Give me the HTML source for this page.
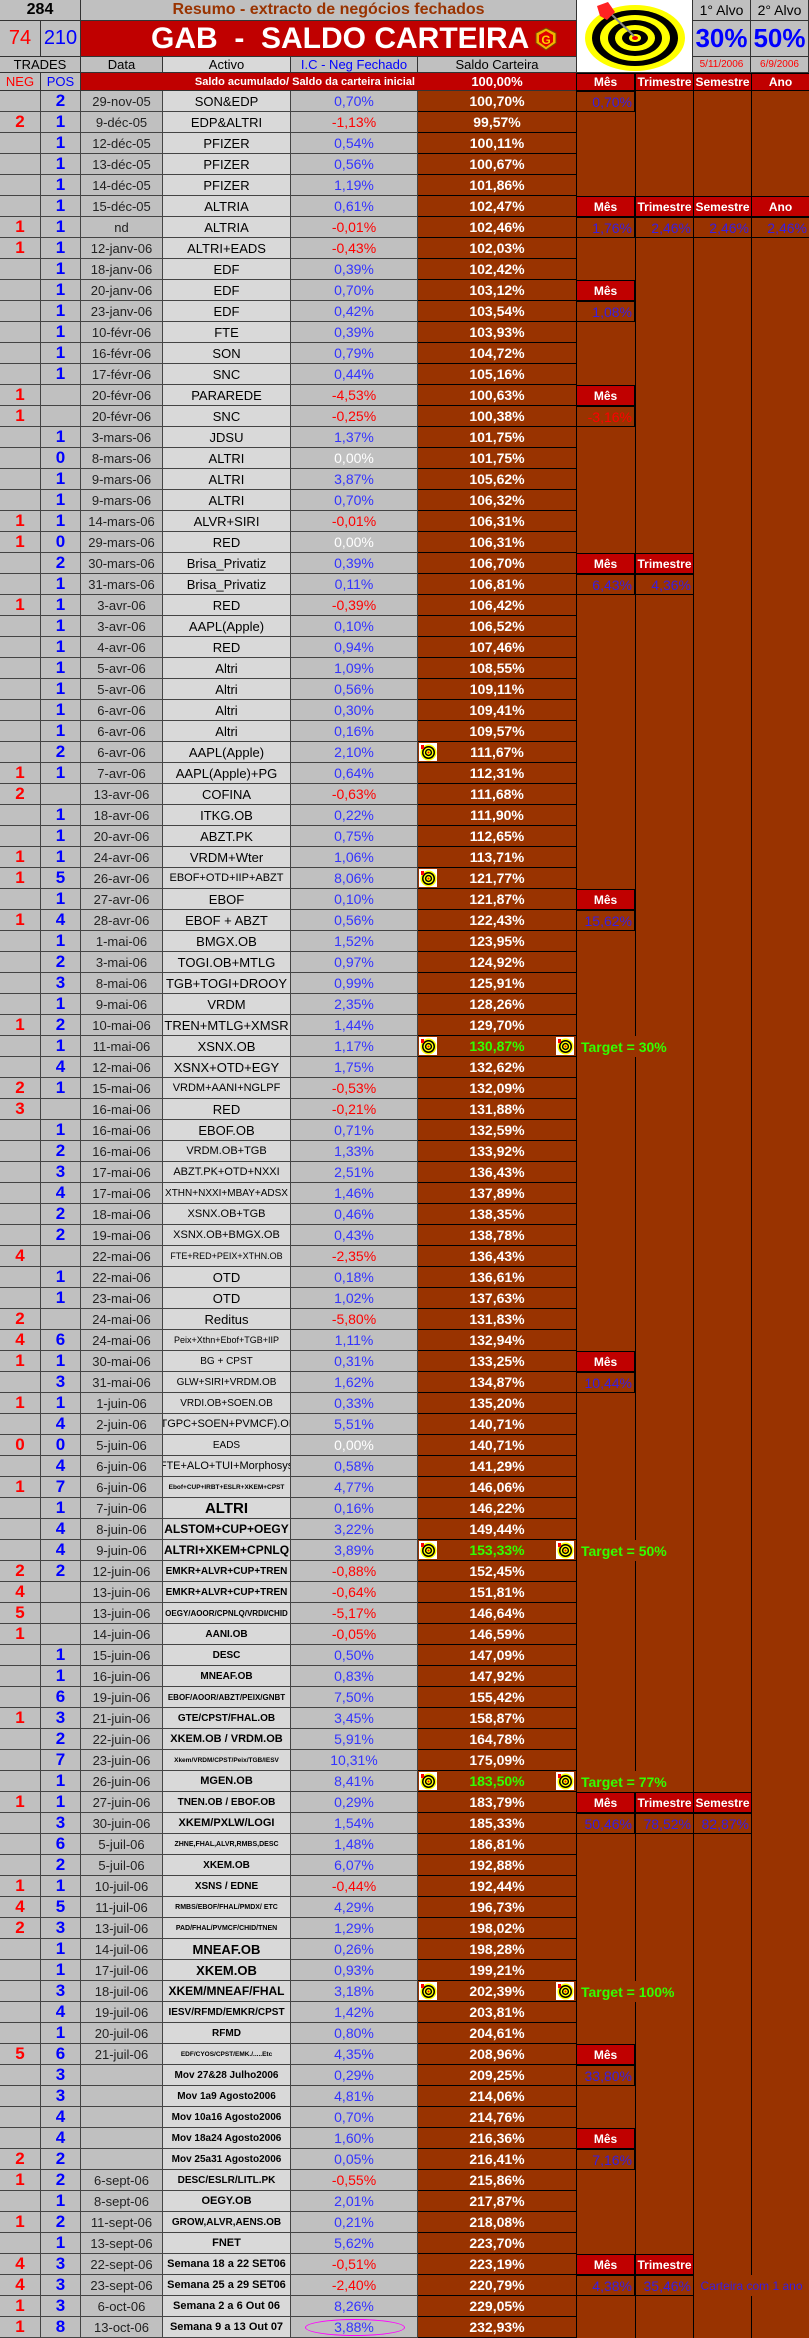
<!DOCTYPE html>
<html><head><meta charset="utf-8">
<style>
*{margin:0;padding:0;box-sizing:border-box}
body{width:809px;height:2338px;position:relative;background:#993300;font-family:"Liberation Sans",Arial,sans-serif;overflow:hidden}
.abs{position:absolute}
.hc{position:absolute;display:flex;align-items:center;justify-content:center;border-right:1px solid #333;border-bottom:1px solid #333;background:#c0c0c0;white-space:nowrap;overflow:hidden}
#rows{position:absolute;left:0;top:91px;width:577px}
.r{display:flex;height:21px}
.r span{display:flex;align-items:center;justify-content:center;height:21px;border-right:1px solid #444;border-bottom:1px solid #444;background:#c0c0c0;white-space:nowrap;overflow:hidden;font-size:13px;color:#000}
.r span:nth-child(1){width:41px;color:#f00;font-weight:bold;font-size:17px}
.r span:nth-child(2){width:40px;color:#00f;font-weight:bold;font-size:17px}
.r span:nth-child(3){width:82px;font-size:13px;color:#222}
.r span:nth-child(4){width:128px;background:#d9d9d9;font-size:13px}
.r span:nth-child(5){width:127px;font-size:14px;color:#33f}
.r span:nth-child(6){width:159px;background:#993300;color:#fff;font-weight:bold;font-size:14px;border-bottom:1px solid #000;border-right:1px solid #000;position:relative}
.r span.ng{color:#f00}
.r span.z{color:#fff}
.r span.g{color:#33ff00!important}
.r span.k{font-size:10px!important;font-weight:bold}
.r span.t{font-size:8px!important;font-weight:bold}
.r span.u{font-size:6.5px!important;font-weight:bold}
.r span.b{font-weight:bold;font-size:12px!important}
.r span.bb{font-weight:bold;font-size:15px!important}
.r span.m{font-size:11px!important}
.ic{position:absolute;top:1px;width:18px;height:18px}
.mh{position:absolute;height:21px;width:59px;background:#c00000;color:#fff;font-weight:bold;font-size:12px;display:flex;align-items:center;justify-content:center;border:1px solid #000}
.mv{position:absolute;height:21px;width:59px;color:#3a1ee0;font-size:14px;display:flex;align-items:center;justify-content:flex-end;padding-right:2px;border:1px solid #000}
.vl{position:absolute;top:73px;width:1px;height:2265px;background:#000}
.tg{position:absolute;left:581px;color:#33ff00;font-weight:bold;font-size:14px;height:21px;display:flex;align-items:center}
</style></head><body>
<svg width="0" height="0" style="position:absolute"><defs><symbol id="t" viewBox="0 0 18 18"><rect width="18" height="18" fill="#fff"/><circle cx="9.5" cy="9.5" r="8" fill="#ff0"/><circle cx="9.5" cy="9.5" r="6.5" fill="#000"/><circle cx="9.5" cy="9.5" r="5" fill="#ff0"/><circle cx="9.5" cy="9.5" r="3.6" fill="#000"/><circle cx="9.5" cy="9.5" r="2.2" fill="#ff0"/><circle cx="9.5" cy="9.5" r="1" fill="#f00"/><path d="M2 2h3v4H2z" fill="#f00"/></symbol></defs></svg>

<div class="hc" style="left:0;top:0;width:81px;height:21px;font-weight:bold;font-size:16px">284</div>
<div class="hc" style="left:81px;top:0;width:496px;height:21px;font-weight:bold;font-size:16px;color:#993300">Resumo - extracto de negócios fechados</div>
<div class="hc" style="left:0;top:21px;width:41px;height:36px;font-size:20px;color:#f00">74</div>
<div class="hc" style="left:41px;top:21px;width:40px;height:36px;font-size:20px;color:#00f">210</div>
<div class="hc" style="left:81px;top:21px;width:496px;height:36px;background:#c00000;color:#fff;font-weight:bold;font-size:30px;justify-content:flex-start;padding-left:70px;white-space:pre">GAB  -  SALDO CARTEIRA</div>
<svg class="abs" style="left:534px;top:27px" width="24" height="24" viewBox="0 0 24 24"><path d="M12 1L22 6V16L12 23L2 16V6Z" fill="#f2b400" stroke="#7a4a00"/><path d="M12 4L19 8V15L12 20L5 15V8Z" fill="#e00000"/><text x="12" y="17" font-size="12" font-weight="bold" fill="#ffd000" text-anchor="middle" font-family="Liberation Sans">G</text></svg>
<div class="hc" style="left:0;top:57px;width:81px;height:16px;font-size:13px">TRADES</div>
<div class="hc" style="left:81px;top:57px;width:82px;height:16px;font-size:13px">Data</div>
<div class="hc" style="left:163px;top:57px;width:128px;height:16px;font-size:13px;background:#d9d9d9">Activo</div>
<div class="hc" style="left:291px;top:57px;width:127px;height:16px;font-size:13px;color:#00f">I.C - Neg Fechado</div>
<div class="hc" style="left:418px;top:57px;width:159px;height:16px;font-size:13px">Saldo Carteira</div>
<div class="hc" style="left:0;top:73px;width:41px;height:18px;font-size:13px;color:#f00">NEG</div>
<div class="hc" style="left:41px;top:73px;width:40px;height:18px;font-size:13px;color:#00f">POS</div>
<div class="hc" style="left:81px;top:73px;width:337px;height:18px;background:#c00000;color:#fff;font-weight:bold;font-size:11px;justify-content:flex-end;padding-right:3px;border-right:none">Saldo acumulado/ Saldo da carteira inicial</div>
<div class="hc" style="left:418px;top:73px;width:159px;height:18px;background:#c00000;color:#fff;font-weight:bold;font-size:13px">100,00%</div>
<div class="abs" style="left:577px;top:0;width:116px;height:73px;background:#fff;border-right:1px solid #333;border-bottom:1px solid #333">
<svg width="115" height="72" viewBox="0 0 115 72"><ellipse cx="58" cy="38" rx="50" ry="33" fill="#ff0"/><ellipse cx="58" cy="38" rx="43" ry="28" fill="#000"/><ellipse cx="58" cy="38" rx="35" ry="23" fill="#ff0"/><ellipse cx="58" cy="38" rx="27" ry="18" fill="#000"/><ellipse cx="58" cy="38" rx="20" ry="13" fill="#ff0"/><ellipse cx="58" cy="38" rx="13" ry="8" fill="#000"/><ellipse cx="58" cy="38" rx="6" ry="4" fill="#ff0"/><ellipse cx="58" cy="38" rx="3" ry="2" fill="#e00"/><line x1="32" y1="12" x2="57" y2="36" stroke="#888" stroke-width="2"/><path d="M20 6L31 2L38 12L30 20L23 16Z" fill="#f22"/></svg></div>
<div class="hc" style="left:693px;top:0;width:58px;height:21px;font-size:14px">1° Alvo</div>
<div class="hc" style="left:751px;top:0;width:58px;height:21px;font-size:14px">2° Alvo</div>
<div class="hc" style="left:693px;top:21px;width:58px;height:36px;font-size:26px;font-weight:bold;color:#00f">30%</div>
<div class="hc" style="left:751px;top:21px;width:58px;height:36px;font-size:26px;font-weight:bold;color:#00f">50%</div>
<div class="hc" style="left:693px;top:57px;width:58px;height:16px;font-size:10px;color:#f00">5/11/2006</div>
<div class="hc" style="left:751px;top:57px;width:58px;height:16px;font-size:10px;color:#f00">6/9/2006</div>

<div class="vl" style="left:576px"></div><div class="vl" style="left:635px"></div><div class="vl" style="left:693px"></div><div class="vl" style="left:751px"></div>
<div class="mh" style="left:576px;top:73px;height:18px">Mês</div><div class="mh" style="left:635px;top:73px;height:18px">Trimestre</div><div class="mh" style="left:693px;top:73px;height:18px">Semestre</div><div class="mh" style="left:751px;top:73px;height:18px">Ano</div>
<div class="mv" style="left:576px;top:91px">0,70%</div>
<div class="mh" style="left:576px;top:196px">Mês</div><div class="mh" style="left:635px;top:196px">Trimestre</div><div class="mh" style="left:693px;top:196px">Semestre</div><div class="mh" style="left:751px;top:196px">Ano</div>
<div class="mv" style="left:576px;top:217px">1,76%</div><div class="mv" style="left:635px;top:217px">2,46%</div><div class="mv" style="left:693px;top:217px">2,46%</div><div class="mv" style="left:751px;top:217px">2,46%</div>
<div class="mh" style="left:576px;top:280px">Mês</div><div class="mv" style="left:576px;top:301px">1,08%</div>
<div class="mh" style="left:576px;top:385px">Mês</div><div class="mv" style="left:576px;top:406px;color:#f00">-3,16%</div>
<div class="mh" style="left:576px;top:553px">Mês</div><div class="mh" style="left:635px;top:553px">Trimestre</div>
<div class="mv" style="left:576px;top:574px">6,43%</div><div class="mv" style="left:635px;top:574px">4,36%</div>
<div class="mh" style="left:576px;top:889px">Mês</div><div class="mv" style="left:576px;top:910px">15,62%</div>
<div class="mh" style="left:576px;top:1351px">Mês</div><div class="mv" style="left:576px;top:1372px">10,44%</div>
<div class="mh" style="left:576px;top:1792px">Mês</div><div class="mh" style="left:635px;top:1792px">Trimestre</div><div class="mh" style="left:693px;top:1792px">Semestre</div>
<div class="mv" style="left:576px;top:1813px">50,46%</div><div class="mv" style="left:635px;top:1813px">78,52%</div><div class="mv" style="left:693px;top:1813px">82,87%</div>
<div class="mh" style="left:576px;top:2044px">Mês</div><div class="mv" style="left:576px;top:2065px">33,80%</div>
<div class="mh" style="left:576px;top:2128px">Mês</div><div class="mv" style="left:576px;top:2149px">7,16%</div>
<div class="mh" style="left:576px;top:2254px">Mês</div><div class="mh" style="left:635px;top:2254px">Trimestre</div>
<div class="mv" style="left:576px;top:2275px">4,38%</div><div class="mv" style="left:635px;top:2275px">35,46%</div>
<div class="abs" style="left:694px;top:2275px;width:115px;height:21px;background:#993300;color:#3a1ee0;font-size:12px;display:flex;align-items:center;justify-content:center;white-space:nowrap">Carteira com 1 ano</div>
<div class="tg" style="top:1036px;background:#993300;width:110px">Target = 30%</div>
<div class="tg" style="top:1540px;background:#993300;width:110px">Target = 50%</div>
<div class="tg" style="top:1771px;background:#993300;width:110px">Target = 77%</div>
<div class="tg" style="top:1981px;background:#993300;width:110px">Target = 100%</div>

<div id="rows">
<div class="r"><span></span><span>2</span><span>29-nov-05</span><span>SON&amp;EDP</span><span>0,70%</span><span>100,70%</span></div>
<div class="r"><span>2</span><span>1</span><span>9-déc-05</span><span>EDP&amp;ALTRI</span><span class="ng">-1,13%</span><span>99,57%</span></div>
<div class="r"><span></span><span>1</span><span>12-déc-05</span><span>PFIZER</span><span>0,54%</span><span>100,11%</span></div>
<div class="r"><span></span><span>1</span><span>13-déc-05</span><span>PFIZER</span><span>0,56%</span><span>100,67%</span></div>
<div class="r"><span></span><span>1</span><span>14-déc-05</span><span>PFIZER</span><span>1,19%</span><span>101,86%</span></div>
<div class="r"><span></span><span>1</span><span>15-déc-05</span><span>ALTRIA</span><span>0,61%</span><span>102,47%</span></div>
<div class="r"><span>1</span><span>1</span><span>nd</span><span>ALTRIA</span><span class="ng">-0,01%</span><span>102,46%</span></div>
<div class="r"><span>1</span><span>1</span><span>12-janv-06</span><span>ALTRI+EADS</span><span class="ng">-0,43%</span><span>102,03%</span></div>
<div class="r"><span></span><span>1</span><span>18-janv-06</span><span>EDF</span><span>0,39%</span><span>102,42%</span></div>
<div class="r"><span></span><span>1</span><span>20-janv-06</span><span>EDF</span><span>0,70%</span><span>103,12%</span></div>
<div class="r"><span></span><span>1</span><span>23-janv-06</span><span>EDF</span><span>0,42%</span><span>103,54%</span></div>
<div class="r"><span></span><span>1</span><span>10-févr-06</span><span>FTE</span><span>0,39%</span><span>103,93%</span></div>
<div class="r"><span></span><span>1</span><span>16-févr-06</span><span>SON</span><span>0,79%</span><span>104,72%</span></div>
<div class="r"><span></span><span>1</span><span>17-févr-06</span><span>SNC</span><span>0,44%</span><span>105,16%</span></div>
<div class="r"><span>1</span><span></span><span>20-févr-06</span><span>PARAREDE</span><span class="ng">-4,53%</span><span>100,63%</span></div>
<div class="r"><span>1</span><span></span><span>20-févr-06</span><span>SNC</span><span class="ng">-0,25%</span><span>100,38%</span></div>
<div class="r"><span></span><span>1</span><span>3-mars-06</span><span>JDSU</span><span>1,37%</span><span>101,75%</span></div>
<div class="r"><span></span><span>0</span><span>8-mars-06</span><span>ALTRI</span><span class="z">0,00%</span><span>101,75%</span></div>
<div class="r"><span></span><span>1</span><span>9-mars-06</span><span>ALTRI</span><span>3,87%</span><span>105,62%</span></div>
<div class="r"><span></span><span>1</span><span>9-mars-06</span><span>ALTRI</span><span>0,70%</span><span>106,32%</span></div>
<div class="r"><span>1</span><span>1</span><span>14-mars-06</span><span>ALVR+SIRI</span><span class="ng">-0,01%</span><span>106,31%</span></div>
<div class="r"><span>1</span><span>0</span><span>29-mars-06</span><span>RED</span><span class="z">0,00%</span><span>106,31%</span></div>
<div class="r"><span></span><span>2</span><span>30-mars-06</span><span>Brisa_Privatiz</span><span>0,39%</span><span>106,70%</span></div>
<div class="r"><span></span><span>1</span><span>31-mars-06</span><span>Brisa_Privatiz</span><span>0,11%</span><span>106,81%</span></div>
<div class="r"><span>1</span><span>1</span><span>3-avr-06</span><span>RED</span><span class="ng">-0,39%</span><span>106,42%</span></div>
<div class="r"><span></span><span>1</span><span>3-avr-06</span><span>AAPL(Apple)</span><span>0,10%</span><span>106,52%</span></div>
<div class="r"><span></span><span>1</span><span>4-avr-06</span><span>RED</span><span>0,94%</span><span>107,46%</span></div>
<div class="r"><span></span><span>1</span><span>5-avr-06</span><span>Altri</span><span>1,09%</span><span>108,55%</span></div>
<div class="r"><span></span><span>1</span><span>5-avr-06</span><span>Altri</span><span>0,56%</span><span>109,11%</span></div>
<div class="r"><span></span><span>1</span><span>6-avr-06</span><span>Altri</span><span>0,30%</span><span>109,41%</span></div>
<div class="r"><span></span><span>1</span><span>6-avr-06</span><span>Altri</span><span>0,16%</span><span>109,57%</span></div>
<div class="r"><span></span><span>2</span><span>6-avr-06</span><span>AAPL(Apple)</span><span>2,10%</span><span><svg class="ic" style="left:1px"><use href="#t"/></svg>111,67%</span></div>
<div class="r"><span>1</span><span>1</span><span>7-avr-06</span><span>AAPL(Apple)+PG</span><span>0,64%</span><span>112,31%</span></div>
<div class="r"><span>2</span><span></span><span>13-avr-06</span><span>COFINA</span><span class="ng">-0,63%</span><span>111,68%</span></div>
<div class="r"><span></span><span>1</span><span>18-avr-06</span><span>ITKG.OB</span><span>0,22%</span><span>111,90%</span></div>
<div class="r"><span></span><span>1</span><span>20-avr-06</span><span>ABZT.PK</span><span>0,75%</span><span>112,65%</span></div>
<div class="r"><span>1</span><span>1</span><span>24-avr-06</span><span>VRDM+Wter</span><span>1,06%</span><span>113,71%</span></div>
<div class="r"><span>1</span><span>5</span><span>26-avr-06</span><span class="m">EBOF+OTD+IIP+ABZT</span><span>8,06%</span><span><svg class="ic" style="left:1px"><use href="#t"/></svg>121,77%</span></div>
<div class="r"><span></span><span>1</span><span>27-avr-06</span><span>EBOF</span><span>0,10%</span><span>121,87%</span></div>
<div class="r"><span>1</span><span>4</span><span>28-avr-06</span><span>EBOF + ABZT</span><span>0,56%</span><span>122,43%</span></div>
<div class="r"><span></span><span>1</span><span>1-mai-06</span><span>BMGX.OB</span><span>1,52%</span><span>123,95%</span></div>
<div class="r"><span></span><span>2</span><span>3-mai-06</span><span>TOGI.OB+MTLG</span><span>0,97%</span><span>124,92%</span></div>
<div class="r"><span></span><span>3</span><span>8-mai-06</span><span>TGB+TOGI+DROOY</span><span>0,99%</span><span>125,91%</span></div>
<div class="r"><span></span><span>1</span><span>9-mai-06</span><span>VRDM</span><span>2,35%</span><span>128,26%</span></div>
<div class="r"><span>1</span><span>2</span><span>10-mai-06</span><span>TREN+MTLG+XMSR</span><span>1,44%</span><span>129,70%</span></div>
<div class="r"><span></span><span>1</span><span>11-mai-06</span><span>XSNX.OB</span><span>1,17%</span><span class="g"><svg class="ic" style="left:1px"><use href="#t"/></svg>130,87%<svg class="ic" style="left:138px"><use href="#t"/></svg></span></div>
<div class="r"><span></span><span>4</span><span>12-mai-06</span><span>XSNX+OTD+EGY</span><span>1,75%</span><span>132,62%</span></div>
<div class="r"><span>2</span><span>1</span><span>15-mai-06</span><span class="m">VRDM+AANI+NGLPF</span><span class="ng">-0,53%</span><span>132,09%</span></div>
<div class="r"><span>3</span><span></span><span>16-mai-06</span><span>RED</span><span class="ng">-0,21%</span><span>131,88%</span></div>
<div class="r"><span></span><span>1</span><span>16-mai-06</span><span>EBOF.OB</span><span>0,71%</span><span>132,59%</span></div>
<div class="r"><span></span><span>2</span><span>16-mai-06</span><span class="m">VRDM.OB+TGB</span><span>1,33%</span><span>133,92%</span></div>
<div class="r"><span></span><span>3</span><span>17-mai-06</span><span class="m">ABZT.PK+OTD+NXXI</span><span>2,51%</span><span>136,43%</span></div>
<div class="r"><span></span><span>4</span><span>17-mai-06</span><span class="k" style="font-weight:normal">XTHN+NXXI+MBAY+ADSX</span><span>1,46%</span><span>137,89%</span></div>
<div class="r"><span></span><span>2</span><span>18-mai-06</span><span class="m">XSNX.OB+TGB</span><span>0,46%</span><span>138,35%</span></div>
<div class="r"><span></span><span>2</span><span>19-mai-06</span><span class="m">XSNX.OB+BMGX.OB</span><span>0,43%</span><span>138,78%</span></div>
<div class="r"><span>4</span><span></span><span>22-mai-06</span><span class="t" style="font-weight:normal;font-size:9px!important">FTE+RED+PEIX+XTHN.OB</span><span class="ng">-2,35%</span><span>136,43%</span></div>
<div class="r"><span></span><span>1</span><span>22-mai-06</span><span>OTD</span><span>0,18%</span><span>136,61%</span></div>
<div class="r"><span></span><span>1</span><span>23-mai-06</span><span>OTD</span><span>1,02%</span><span>137,63%</span></div>
<div class="r"><span>2</span><span></span><span>24-mai-06</span><span>Reditus</span><span class="ng">-5,80%</span><span>131,83%</span></div>
<div class="r"><span>4</span><span>6</span><span>24-mai-06</span><span class="t" style="font-weight:normal;font-size:9px!important">Peix+Xthn+Ebof+TGB+IIP</span><span>1,11%</span><span>132,94%</span></div>
<div class="r"><span>1</span><span>1</span><span>30-mai-06</span><span class="k" style="font-weight:normal">BG + CPST</span><span>0,31%</span><span>133,25%</span></div>
<div class="r"><span></span><span>3</span><span>31-mai-06</span><span class="k" style="font-weight:normal">GLW+SIRI+VRDM.OB</span><span>1,62%</span><span>134,87%</span></div>
<div class="r"><span>1</span><span>1</span><span>1-juin-06</span><span class="k" style="font-weight:normal">VRDI.OB+SOEN.OB</span><span>0,33%</span><span>135,20%</span></div>
<div class="r"><span></span><span>4</span><span>2-juin-06</span><span class="m">(TGPC+SOEN+PVMCF).OB</span><span>5,51%</span><span>140,71%</span></div>
<div class="r"><span>0</span><span>0</span><span>5-juin-06</span><span class="k" style="font-weight:normal">EADS</span><span class="z">0,00%</span><span>140,71%</span></div>
<div class="r"><span></span><span>4</span><span>6-juin-06</span><span class="m">FTE+ALO+TUI+Morphosys</span><span>0,58%</span><span>141,29%</span></div>
<div class="r"><span>1</span><span>7</span><span>6-juin-06</span><span class="u">Ebof+CUP+IRBT+ESLR+XKEM+CPST</span><span>4,77%</span><span>146,06%</span></div>
<div class="r"><span></span><span>1</span><span>7-juin-06</span><span class="bb">ALTRI</span><span>0,16%</span><span>146,22%</span></div>
<div class="r"><span></span><span>4</span><span>8-juin-06</span><span class="b">ALSTOM+CUP+OEGY</span><span>3,22%</span><span>149,44%</span></div>
<div class="r"><span></span><span>4</span><span>9-juin-06</span><span class="b">ALTRI+XKEM+CPNLQ</span><span>3,89%</span><span class="g"><svg class="ic" style="left:1px"><use href="#t"/></svg>153,33%<svg class="ic" style="left:138px"><use href="#t"/></svg></span></div>
<div class="r"><span>2</span><span>2</span><span>12-juin-06</span><span class="k">EMKR+ALVR+CUP+TREN</span><span class="ng">-0,88%</span><span>152,45%</span></div>
<div class="r"><span>4</span><span></span><span>13-juin-06</span><span class="k">EMKR+ALVR+CUP+TREN</span><span class="ng">-0,64%</span><span>151,81%</span></div>
<div class="r"><span>5</span><span></span><span>13-juin-06</span><span class="t">OEGY/AOOR/CPNLQ/VRDI/CHID</span><span class="ng">-5,17%</span><span>146,64%</span></div>
<div class="r"><span>1</span><span></span><span>14-juin-06</span><span class="k">AANI.OB</span><span class="ng">-0,05%</span><span>146,59%</span></div>
<div class="r"><span></span><span>1</span><span>15-juin-06</span><span class="k">DESC</span><span>0,50%</span><span>147,09%</span></div>
<div class="r"><span></span><span>1</span><span>16-juin-06</span><span class="k">MNEAF.OB</span><span>0,83%</span><span>147,92%</span></div>
<div class="r"><span></span><span>6</span><span>19-juin-06</span><span class="t">EBOF/AOOR/ABZT/PEIX/GNBT</span><span>7,50%</span><span>155,42%</span></div>
<div class="r"><span>1</span><span>3</span><span>21-juin-06</span><span class="k">GTE/CPST/FHAL.OB</span><span>3,45%</span><span>158,87%</span></div>
<div class="r"><span></span><span>2</span><span>22-juin-06</span><span class="k" style="font-size:11px!important">XKEM.OB / VRDM.OB</span><span>5,91%</span><span>164,78%</span></div>
<div class="r"><span></span><span>7</span><span>23-juin-06</span><span class="u">Xkem/VRDM/CPST/Peix/TGB/IESV</span><span>10,31%</span><span>175,09%</span></div>
<div class="r"><span></span><span>1</span><span>26-juin-06</span><span class="b" style="font-size:11px!important">MGEN.OB</span><span>8,41%</span><span class="g"><svg class="ic" style="left:1px"><use href="#t"/></svg>183,50%<svg class="ic" style="left:138px"><use href="#t"/></svg></span></div>
<div class="r"><span>1</span><span>1</span><span>27-juin-06</span><span class="k">TNEN.OB / EBOF.OB</span><span>0,29%</span><span>183,79%</span></div>
<div class="r"><span></span><span>3</span><span>30-juin-06</span><span class="k" style="font-size:11px!important">XKEM/PXLW/LOGI</span><span>1,54%</span><span>185,33%</span></div>
<div class="r"><span></span><span>6</span><span>5-juil-06</span><span class="t" style="font-size:7px!important">ZHNE,FHAL,ALVR,RMBS,DESC</span><span>1,48%</span><span>186,81%</span></div>
<div class="r"><span></span><span>2</span><span>5-juil-06</span><span class="k">XKEM.OB</span><span>6,07%</span><span>192,88%</span></div>
<div class="r"><span>1</span><span>1</span><span>10-juil-06</span><span class="k">XSNS / EDNE</span><span class="ng">-0,44%</span><span>192,44%</span></div>
<div class="r"><span>4</span><span>5</span><span>11-juil-06</span><span class="t" style="font-size:7px!important">RMBS/EBOF/FHAL/PMDX/ ETC</span><span>4,29%</span><span>196,73%</span></div>
<div class="r"><span>2</span><span>3</span><span>13-juil-06</span><span class="t" style="font-size:7px!important">PAD/FHAL/PVMCF/CHID/TNEN</span><span>1,29%</span><span>198,02%</span></div>
<div class="r"><span></span><span>1</span><span>14-juil-06</span><span class="b" style="font-size:13px!important">MNEAF.OB</span><span>0,26%</span><span>198,28%</span></div>
<div class="r"><span></span><span>1</span><span>17-juil-06</span><span class="b" style="font-size:13px!important">XKEM.OB</span><span>0,93%</span><span>199,21%</span></div>
<div class="r"><span></span><span>3</span><span>18-juil-06</span><span class="b">XKEM/MNEAF/FHAL</span><span>3,18%</span><span><svg class="ic" style="left:1px"><use href="#t"/></svg>202,39%<svg class="ic" style="left:138px"><use href="#t"/></svg></span></div>
<div class="r"><span></span><span>4</span><span>19-juil-06</span><span class="k">IESV/RFMD/EMKR/CPST</span><span>1,42%</span><span>203,81%</span></div>
<div class="r"><span></span><span>1</span><span>20-juil-06</span><span class="k">RFMD</span><span>0,80%</span><span>204,61%</span></div>
<div class="r"><span>5</span><span>6</span><span>21-juil-06</span><span class="u">EDF/CYOS/CPST/EMK./.....Etc</span><span>4,35%</span><span>208,96%</span></div>
<div class="r"><span></span><span>3</span><span></span><span class="k">Mov 27&amp;28 Julho2006</span><span>0,29%</span><span>209,25%</span></div>
<div class="r"><span></span><span>3</span><span></span><span class="k">Mov 1a9 Agosto2006</span><span>4,81%</span><span>214,06%</span></div>
<div class="r"><span></span><span>4</span><span></span><span class="k">Mov 10a16 Agosto2006</span><span>0,70%</span><span>214,76%</span></div>
<div class="r"><span></span><span>4</span><span></span><span class="k">Mov 18a24 Agosto2006</span><span>1,60%</span><span>216,36%</span></div>
<div class="r"><span>2</span><span>2</span><span></span><span class="k">Mov 25a31 Agosto2006</span><span>0,05%</span><span>216,41%</span></div>
<div class="r"><span>1</span><span>2</span><span>6-sept-06</span><span class="k">DESC/ESLR/LITL.PK</span><span class="ng">-0,55%</span><span>215,86%</span></div>
<div class="r"><span></span><span>1</span><span>8-sept-06</span><span class="k" style="font-size:11px!important">OEGY.OB</span><span>2,01%</span><span>217,87%</span></div>
<div class="r"><span>1</span><span>2</span><span>11-sept-06</span><span class="k">GROW,ALVR,AENS.OB</span><span>0,21%</span><span>218,08%</span></div>
<div class="r"><span></span><span>1</span><span>13-sept-06</span><span class="k" style="font-size:11px!important">FNET</span><span>5,62%</span><span>223,70%</span></div>
<div class="r"><span>4</span><span>3</span><span>22-sept-06</span><span class="k" style="font-size:11px!important">Semana 18 a 22 SET06</span><span class="ng">-0,51%</span><span>223,19%</span></div>
<div class="r"><span>4</span><span>3</span><span>23-sept-06</span><span class="k" style="font-size:11px!important">Semana 25 a 29 SET06</span><span class="ng">-2,40%</span><span>220,79%</span></div>
<div class="r"><span>1</span><span>3</span><span>6-oct-06</span><span class="k" style="font-size:11px!important">Semana 2 a 6 Out 06</span><span>8,26%</span><span>229,05%</span></div>
<div class="r"><span>1</span><span>8</span><span>13-oct-06</span><span class="k" style="font-size:11px!important">Semana 9 a 13 Out 07</span><span style="position:relative">3,88%<i class="abs" style="left:14px;top:2px;width:100px;height:17px;border:1px solid #f0f;border-radius:50%"></i></span><span>232,93%</span></div>
</div>
</body></html>
